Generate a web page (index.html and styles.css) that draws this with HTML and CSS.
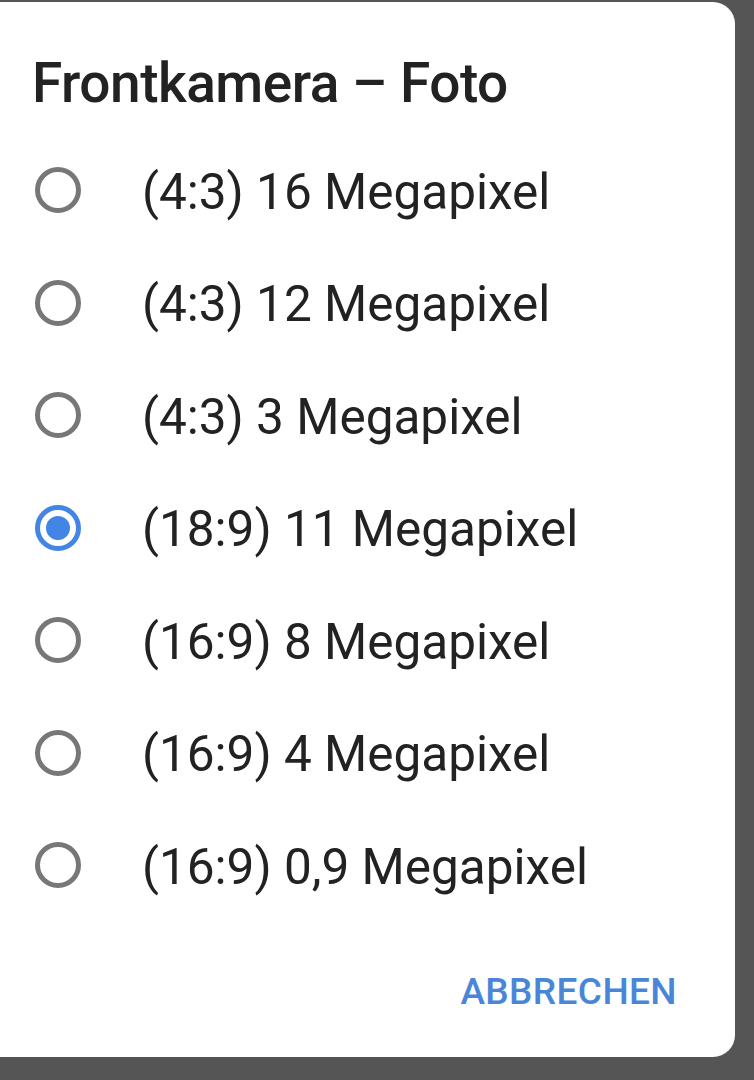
FILE: index.html
```html
<!DOCTYPE html>
<html lang="de">
<head>
  <meta charset="UTF-8">
  <meta name="viewport" content="width=device-width, initial-scale=1.0">
  <title>Frontkamera – Foto</title>
  <link rel="stylesheet" href="styles.css">
</head>
<body>
  <div class="dialog">
    <h1 class="dialog-title">Frontkamera – Foto</h1>

    <ul class="options">
      <li class="option"><span class="radio"></span><span class="label">(4:3) 16 Megapixel</span></li>
      <li class="option"><span class="radio"></span><span class="label">(4:3) 12 Megapixel</span></li>
      <li class="option"><span class="radio"></span><span class="label">(4:3) 3 Megapixel</span></li>
      <li class="option"><span class="radio checked"></span><span class="label">(18:9) 11 Megapixel</span></li>
      <li class="option"><span class="radio"></span><span class="label">(16:9) 8 Megapixel</span></li>
      <li class="option"><span class="radio"></span><span class="label">(16:9) 4 Megapixel</span></li>
      <li class="option"><span class="radio"></span><span class="label">(16:9) 0,9 Megapixel</span></li>
    </ul>

    <div class="actions">
      <button class="cancel-btn">ABBRECHEN</button>
    </div>
  </div>
</body>
</html>
```

FILE: styles.css
```css
* {
  box-sizing: border-box;
}
html, body {
  height: 100%;
}
body {
  margin: 0;
  font-family: Roboto, "Noto Sans", Arial, sans-serif;
  background: #555;
  color: #212121;
  overflow: hidden;
  padding-top: 2px;
}
.dialog {
  margin-left: -30px;
  width: 765px;
  height: 1055px;
  background: #fff;
  border-radius: 22px;
  padding: 54px 58px 47px 62px;
  display: flex;
  flex-direction: column;
}
.dialog-title {
  margin: 0;
  font-size: 55px;
  font-weight: 500;
  line-height: 1;
  letter-spacing: -0.5px;
  color: #222;
}
.options {
  list-style: none;
  margin: 23px 0 0;
  padding: 0;
}
.option {
  display: flex;
  align-items: center;
  height: 112.5px;
  padding-left: 3px;
}
.radio {
  width: 46px;
  height: 46px;
  border: 5px solid #777;
  border-radius: 50%;
  flex: none;
  display: flex;
  align-items: center;
  justify-content: center;
}
.radio.checked {
  border-color: #4285e4;
}
.radio.checked::after {
  content: "";
  width: 24px;
  height: 24px;
  border-radius: 50%;
  background: #4285e4;
}
.label {
  margin-left: 61px;
  margin-top: 4px;
  font-size: 49.5px;
  line-height: 1;
  color: #222;
}
.actions {
  margin-top: auto;
  display: flex;
  justify-content: flex-end;
}
.cancel-btn {
  background: none;
  border: none;
  padding: 0;
  font-family: Roboto, "Noto Sans", Arial, sans-serif;
  font-size: 37px;
  font-weight: 500;
  line-height: 1;
  letter-spacing: 0.4px;
  color: #4a86d8;
  cursor: pointer;
}
```
